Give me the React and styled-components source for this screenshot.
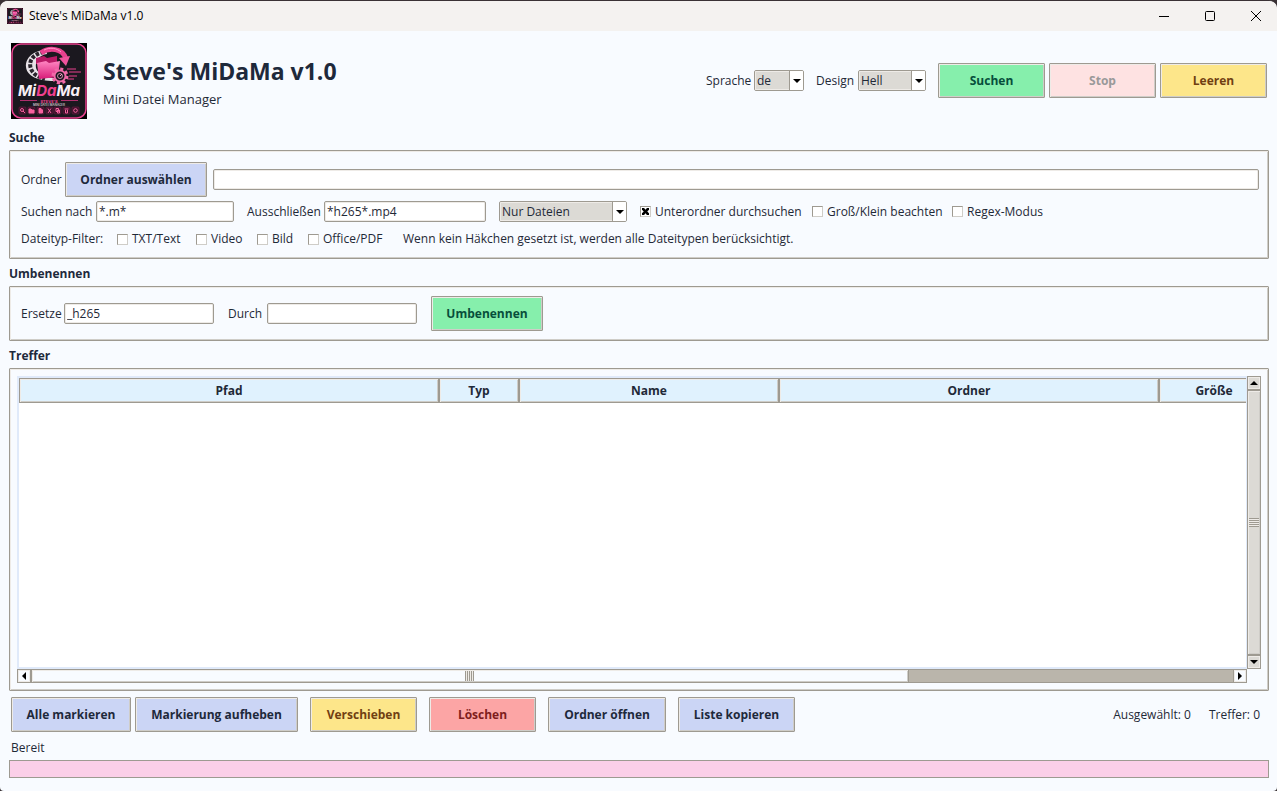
import { useState } from 'react';
import styled, { createGlobalStyle } from 'styled-components';

const GlobalStyle = createGlobalStyle`
  * {
    box-sizing: border-box;
  }
  body {
    margin: 0;
    background: #3a3235;
    font-family: 'Open Sans', 'Noto Sans', sans-serif;
    font-size: 12px;
    line-height: 20px;
    color: #1f2937;
  }
  button, input, select {
    font: inherit;
    color: inherit;
  }
`;

const Window = styled.div`
  display: flex;
  flex-direction: column;
  min-height: 100vh;
  border-top: 1px solid #3a3235;
  border-radius: 8px 8px 4px 4px;
  background: #f8fbff;
  overflow: hidden;
`;

const TitleBar = styled.div`
  display: flex;
  align-items: center;
  gap: 4px;
  height: 30px;
  padding-left: 7px;
  background: #f4f2f0;
  color: #000;
`;

const TitleText = styled.span`
  flex: 1;
  padding-left: 2px;
`;

const WindowButton = styled.button`
  display: flex;
  align-items: center;
  justify-content: center;
  width: 42px;
  height: 30px;
  padding: 0;
  border: none;
  background: transparent;
`;

const Header = styled.header`
  display: flex;
  align-items: center;
  padding: 12px 10px 9px 11px;
`;

const Brand = styled.div`
  flex: 1;
  padding-left: 16px;
`;

const BrandTitle = styled.h1`
  margin: 0;
  font-size: 23px;
  font-weight: 700;
  line-height: 36px;
  color: #1e293b;
`;

const BrandSubtitle = styled.p`
  margin: 0;
  font-size: 13px;
  line-height: 20px;
`;

const HeaderTools = styled.div`
  display: flex;
  align-items: center;
  gap: 12px;
  padding-bottom: 1px;
`;

const ButtonGroup = styled.div`
  display: flex;
  gap: 4px;
`;

const tones = {
  indigo: { background: '#cbd5f5', color: '#1e293b' },
  green: { background: '#86efac', color: '#064e3b' },
  yellow: { background: '#fde68a', color: '#713f12' },
  red: { background: '#fca5a5', color: '#7f1d1d' },
  rose: { background: '#fee2e2', color: '#999999' },
};

const Button = styled.button`
  flex: none;
  width: ${({ $width }) => $width || 107}px;
  height: 35px;
  padding: 0;
  border: 1px solid #9e9a91;
  border-radius: 1px;
  box-shadow: inset 1px 1px 0 #eeebe7, inset -1px -1px 0 #cfcdc8;
  background: ${({ $tone }) => tones[$tone].background};
  color: ${({ $tone }) => tones[$tone].color};
  font-weight: 700;
  white-space: nowrap;
`;

const Content = styled.main`
  display: flex;
  flex: 1;
  flex-direction: column;
  padding: 0 8px 13px 9px;
`;

const Section = styled.section`
  display: flex;
  flex-direction: column;
  flex: ${({ $grow }) => ($grow ? 1 : 'none')};
  margin-bottom: 5px;
`;

const SectionTitle = styled.h2`
  margin: 0;
  padding-bottom: 2px;
  font-size: 12px;
  font-weight: 700;
  line-height: 20px;
  color: #1e293b;
`;

const Frame = styled.div`
  display: flex;
  flex: 1;
  flex-direction: column;
  padding: ${({ $padding }) => $padding};
  border: 1px solid #9e9a91;
  border-radius: 1px;
  box-shadow: inset 1px 1px 0 #eeebe7, inset -1px -1px 0 #cfcdc8;
`;

const Row = styled.div`
  display: flex;
  align-items: center;
  gap: ${({ $gap }) => $gap || 0}px;
  min-height: ${({ $height }) => $height || 0}px;
`;

const Field = styled.div`
  display: flex;
  flex: ${({ $grow }) => ($grow ? 1 : 'none')};
  align-items: center;
`;

const Label = styled.label`
  flex: none;
  width: ${({ $width }) => $width}px;
  white-space: nowrap;
`;

const TextInput = styled.input`
  width: ${({ $width }) => ($width ? `${$width}px` : 'auto')};
  flex: ${({ $width }) => ($width ? 'none' : 1)};
  height: 21px;
  padding: 0 2px;
  border: 1px solid #9e9a91;
  border-radius: 2px;
  box-shadow: inset 1px 1px 0 #eeebe7, inset -1px -1px 0 #eeebe7;
  background: #fff;
  outline: none;
`;

const SelectBox = styled.div`
  display: grid;
  grid-template-columns: 1fr 14px;
  width: ${({ $width }) => $width}px;
  height: 21px;
  border: 1px solid #9e9a91;
  border-radius: 2px;
  background: #dcdad5;
  overflow: hidden;
`;

const NativeSelect = styled.select`
  grid-area: 1 / 1 / 2 / 3;
  appearance: none;
  height: 19px;
  padding: 0 16px 0 2px;
  border: none;
  box-shadow: inset 1px 1px 0 #eeebe7, inset 0 -1px 0 #eeebe7;
  background: transparent;
  line-height: 18px;
  outline: none;
`;

const SelectArrow = styled.span`
  grid-area: 1 / 2;
  display: flex;
  align-items: center;
  justify-content: center;
  border-left: 1px solid #9e9a91;
  background: #fff;
  pointer-events: none;
`;

const CheckLabel = styled.label`
  display: flex;
  flex: none;
  align-items: center;
  gap: 4px;
  width: ${({ $width }) => $width}px;
  white-space: nowrap;
`;

const CheckBox = styled.input.attrs({ type: 'checkbox' })`
  appearance: none;
  display: grid;
  place-items: center;
  width: 11px;
  height: 11px;
  margin: 0;
  border: 1px solid;
  border-color: #9e9a91 #cfcdc8 #cfcdc8 #9e9a91;
  background: #fff;

  &:checked::before {
    content: '';
    width: 7px;
    height: 7px;
    background: #000;
    clip-path: polygon(0 0, 30% 0, 50% 25%, 70% 0, 100% 0, 100% 25%, 75% 50%, 100% 75%, 100% 100%, 70% 100%, 50% 75%, 30% 100%, 0 100%, 0 75%, 25% 50%, 0 25%);
  }
`;

const ResultGrid = styled.div`
  display: grid;
  flex: 1;
  grid-template-columns: minmax(0, 1fr) 14px;
  grid-template-rows: 1fr 14px;
`;

const TableView = styled.div`
  border: 2px solid #e0eafa;
  border-right-width: 1px;
  background: #fff;
  overflow: hidden;
`;

const ResultTable = styled.table`
  width: 1250px;
  table-layout: fixed;
  border-collapse: separate;
  border-spacing: 0;
`;

const HeadCell = styled.th`
  width: ${({ $width }) => $width}px;
  height: 25px;
  padding: 0;
  border: 1px solid #9e9a91;
  box-shadow: inset 1px 1px 0 #eeebe7, inset -1px -1px 0 #cfcdc8;
  background: #e0f2fe;
  font-weight: 700;
  text-align: center;
`;

const ScrollBar = styled.div`
  display: flex;
  flex-direction: ${({ $vertical }) => ($vertical ? 'column' : 'row')};
  border: 1px solid #9e9a91;
  background: ${({ $vertical }) => ($vertical ? '#dcdad5' : '#bab5ab')};
`;

const ScrollButton = styled.button`
  display: flex;
  flex: none;
  align-items: center;
  justify-content: center;
  width: 12px;
  height: 12px;
  padding: 0;
  border: none;
  box-shadow: inset 1px 1px 0 #eeebe7, inset -1px -1px 0 #eeebe7;
  background: ${({ $vertical }) => ($vertical ? '#dcdad5' : '#f8fbff')};
`;

const ScrollTrack = styled.div`
  display: flex;
  flex: 1;
  border: solid #9e9a91;
  border-width: ${({ $vertical }) => ($vertical ? '2px 0' : '0 1px 0 2px')};
`;

const ScrollThumb = styled.div`
  display: flex;
  align-items: center;
  justify-content: center;
  width: ${({ $vertical }) => ($vertical ? '100%' : '73%')};
  border-right: ${({ $vertical }) => ($vertical ? 'none' : '1px solid #9e9a91')};
  box-shadow: inset 1px 1px 0 #eeebe7, inset -1px -1px 0 #cfcdc8;
  background: ${({ $vertical }) => ($vertical ? '#dcdad5' : '#f8fbff')};
`;

const Grip = styled.span`
  width: ${({ $vertical }) => ($vertical ? 10 : 9)}px;
  height: ${({ $vertical }) => ($vertical ? 9 : 10)}px;
  background: repeating-linear-gradient(
    ${({ $vertical }) => ($vertical ? '180deg' : '90deg')},
    #9e9a91 0 1px,
    #eeebe7 1px 2px
  );
`;

const ActionBar = styled.div`
  display: flex;
  align-items: center;
  gap: 12px;
  padding: 1px 9px 0 2px;
`;

const Counters = styled.div`
  display: flex;
  flex: 1;
  justify-content: flex-end;
  gap: 18px;
  white-space: nowrap;
`;

const Status = styled.p`
  margin: 6px 0 2px 2px;
`;

const ProgressBar = styled.div`
  height: 18px;
  border: 1px solid #9e9a91;
  background: #fbcfe8;
`;

const Arrow = ({ direction = 'down' }) => {
  const points = {
    down: '0,2 8,2 4,6',
    up: '0,6 8,6 4,2',
    left: '6,0 6,8 2,4',
    right: '2,0 2,8 6,4',
  };
  return (
    <svg width="8" height="8" viewBox="0 0 8 8" aria-hidden="true">
      <polygon points={points[direction]} fill="#000" />
    </svg>
  );
};

const Select = ({ width, options, ...rest }) => (
  <SelectBox $width={width}>
    <NativeSelect {...rest}>
      {options.map(option => (
        <option key={option}>{option}</option>
      ))}
    </NativeSelect>
    <SelectArrow>
      <Arrow />
    </SelectArrow>
  </SelectBox>
);

const Check = ({ width, label, ...rest }) => (
  <CheckLabel $width={width}>
    <CheckBox {...rest} />
    {label}
  </CheckLabel>
);

const Logo = ({ size }) => (
  <svg width={size} height={size} viewBox="0 0 76 76" role="img" aria-label="MiDaMa">
    <defs>
      <linearGradient id="pink" x1="0" y1="0" x2="0" y2="1">
        <stop offset="0" stopColor="#ff86c2" />
        <stop offset="1" stopColor="#d81b78" />
      </linearGradient>
    </defs>
    <rect width="76" height="76" fill="#000" />
    <rect x="1" y="1" width="74" height="74" rx="9" fill="#1b181f" stroke="#e9418f" strokeWidth="1.500" />
    {/* film strip */}
    <path d="M35 7C24 7 14 14 15 24C16 33 27 38 43 38L43 35C34 35 27 31 25 25C24 18 28 12 36 11z" fill="#e8e2e8" />
    <path d="M33 9C22 11 17 18 20 26C22 31 27 34 34 36" fill="none" stroke="#2a242d" strokeWidth="4" strokeDasharray="3.500 1.500" />
    {/* arrow */}
    <path d="M30 10C38 4 52 5 55 16" fill="none" stroke="#e9418f" strokeWidth="5" />
    <path d="M33 7C39 4 46 5 50 9" fill="none" stroke="#ff9acb" strokeWidth="1" />
    <path d="M48 15l11-2-4 10z" fill="#f0539c" />
    {/* folders */}
    <path d="M25 15l8-2 3 2 10-2v8H25z" fill="#b81a66" />
    <path d="M26 20l9-2 3 2 11-2-2 16-19 2z" fill="url(#pink)" />
    {/* gear with motion lines */}
    <path d="M56 26h9M58 29h12M58 33h8M57 36h6" stroke="#e9418f" strokeWidth="1" />
    <circle cx="49" cy="33" r="7" fill="none" stroke="#f06aa9" strokeWidth="3" strokeDasharray="3 2.500" />
    <circle cx="49" cy="33" r="5.500" fill="#1b181f" stroke="#f06aa9" strokeWidth="2" />
    <circle cx="49" cy="33" r="2.500" fill="none" stroke="#f7a3cb" strokeWidth="0.800" />
    <path d="M49 33l2-2" stroke="#f7a3cb" strokeWidth="1" />
    <text x="38" y="53" textAnchor="middle" fontFamily="Inter, sans-serif" fontSize="15" fontWeight="700" fontStyle="italic" fill="#f8eff5">
      Mi<tspan fill="#f0408f">Da</tspan>Ma
    </text>
    <path d="M9 57.500h17M50 57.500h17" stroke="#b02e6d" strokeWidth="1" />
    <text x="38" y="60" textAnchor="middle" fontFamily="Inter, sans-serif" fontSize="4" fontWeight="700" fill="#e9418f">
      STEVE'S
    </text>
    <text x="38" y="63" textAnchor="middle" fontFamily="Inter, sans-serif" fontSize="3" fontWeight="600" fill="#cfc4cc">
      MINI DATEI MANAGER
    </text>
    {/* tool strip */}
    {[8, 17, 26, 35, 43, 52, 61].map(x => (
      <rect key={x} x={x} y="64" width="7" height="7" rx="1" fill="#3a1229" stroke="#7d1d4f" strokeWidth="0.500" />
    ))}
    <g fill="none" stroke="#f7609f" strokeWidth="1">
      <circle cx="11" cy="67" r="1.500" />
      <path d="M12 68l2 2" />
      <path d="M18 66h2l1 1h2v3h-5z" fill="#f7609f" />
      <path d="M28 65.500h2l1.500 1.500v3h-3.500z" fill="#f7609f" />
      <path d="M37 65.500l3 4.500M40 65.500l-3 4.500" />
      <path d="M45 65.500h2.500v3H45zM46.500 67h2v3h-2z" />
      <path d="M53.500 66h4M54.500 67v3h2v-3" />
      <circle cx="64.500" cy="67.500" r="1.800" />
    </g>
  </svg>
);

const columns = [
  { title: 'Pfad', width: 420 },
  { title: 'Typ', width: 80 },
  { title: 'Name', width: 260 },
  { title: 'Ordner', width: 380 },
  { title: 'Größe', width: 110 },
];

const App = () => {
  const [folder, setFolder] = useState('');
  const [pattern, setPattern] = useState('*.m*');
  const [exclude, setExclude] = useState('*h265*.mp4');
  const [replace, setReplace] = useState('_h265');
  const [replaceBy, setReplaceBy] = useState('');

  return (
    <>
      <GlobalStyle />
      <Window>
        <TitleBar>
          <Logo size={16} />
          <TitleText>Steve's MiDaMa v1.0</TitleText>
          <WindowButton aria-label="Minimieren">
            <svg width="10" height="11" viewBox="0 0 10 11">
              <path d="M0 5.500h10" stroke="#000" />
            </svg>
          </WindowButton>
          <WindowButton aria-label="Maximieren">
            <svg width="10" height="10" viewBox="0 0 10 10">
              <rect x="0.500" y="0.500" width="9" height="9" rx="1" fill="none" stroke="#000" />
            </svg>
          </WindowButton>
          <WindowButton aria-label="Schließen">
            <svg width="10" height="10" viewBox="0 0 10 10">
              <path d="M0 0l10 10M10 0l-10 10" stroke="#000" />
            </svg>
          </WindowButton>
        </TitleBar>

        <Header>
          <Logo size={76} />
          <Brand>
            <BrandTitle>Steve's MiDaMa v1.0</BrandTitle>
            <BrandSubtitle>Mini Datei Manager</BrandSubtitle>
          </Brand>
          <HeaderTools>
            <Field>
              <Label htmlFor="language" $width={48}>Sprache</Label>
              <Select id="language" width={50} options={['de', 'en']} />
            </Field>
            <Field>
              <Label htmlFor="theme" $width={42}>Design</Label>
              <Select id="theme" width={68} options={['Hell', 'Dunkel']} />
            </Field>
            <ButtonGroup>
              <Button $tone="green">Suchen</Button>
              <Button $tone="rose" disabled>Stop</Button>
              <Button $tone="yellow">Leeren</Button>
            </ButtonGroup>
          </HeaderTools>
        </Header>

        <Content>
          <Section>
            <SectionTitle>Suche</SectionTitle>
            <Frame $padding="11px 9px 6px 11px">
              <Row $gap={6} $height={35}>
                <Field>
                  <Label htmlFor="folder" $width={44}>Ordner</Label>
                  <Button $tone="indigo" $width={142}>Ordner auswählen</Button>
                </Field>
                <Field $grow>
                  <TextInput id="folder" value={folder} onChange={e => setFolder(e.target.value)} />
                </Field>
              </Row>
              <Row $gap={13} $height={29}>
                <Field>
                  <Label htmlFor="pattern" $width={75}>Suchen nach</Label>
                  <TextInput id="pattern" $width={138} value={pattern} onChange={e => setPattern(e.target.value)} />
                </Field>
                <Field>
                  <Label htmlFor="exclude" $width={77}>Ausschließen</Label>
                  <TextInput id="exclude" $width={162} value={exclude} onChange={e => setExclude(e.target.value)} />
                </Field>
                <Select aria-label="Suchbereich" width={128} options={['Nur Dateien', 'Nur Ordner']} />
                <Field>
                  <Check width={172} label="Unterordner durchsuchen" defaultChecked />
                  <Check width={140} label="Groß/Klein beachten" />
                  <Check width={100} label="Regex-Modus" />
                </Field>
              </Row>
              <Row $height={26}>
                <Label as="span" $width={96}>Dateityp-Filter:</Label>
                <Check width={79} label="TXT/Text" />
                <Check width={61} label="Video" />
                <Check width={51} label="Bild" />
                <Check width={95} label="Office/PDF" />
                <span>Wenn kein Häkchen gesetzt ist, werden alle Dateitypen berücksichtigt.</span>
              </Row>
            </Frame>
          </Section>

          <Section>
            <SectionTitle>Umbenennen</SectionTitle>
            <Frame $padding="9px 11px">
              <Row $gap={14}>
                <Field>
                  <Label htmlFor="replace" $width={43}>Ersetze</Label>
                  <TextInput id="replace" $width={150} value={replace} onChange={e => setReplace(e.target.value)} />
                </Field>
                <Field>
                  <Label htmlFor="replaceBy" $width={39}>Durch</Label>
                  <TextInput id="replaceBy" $width={150} value={replaceBy} onChange={e => setReplaceBy(e.target.value)} />
                </Field>
                <Button $tone="green" $width={112}>Umbenennen</Button>
              </Row>
            </Frame>
          </Section>

          <Section $grow>
            <SectionTitle>Treffer</SectionTitle>
            <Frame $padding="7px">
              <ResultGrid>
                <TableView>
                  <ResultTable>
                    <thead>
                      <tr>
                        {columns.map(({ title, width }) => (
                          <HeadCell key={title} $width={width} scope="col">{title}</HeadCell>
                        ))}
                      </tr>
                    </thead>
                    <tbody />
                  </ResultTable>
                </TableView>
                <ScrollBar $vertical>
                  <ScrollButton $vertical aria-label="Nach oben"><Arrow direction="up" /></ScrollButton>
                  <ScrollTrack $vertical>
                    <ScrollThumb $vertical><Grip $vertical /></ScrollThumb>
                  </ScrollTrack>
                  <ScrollButton $vertical aria-label="Nach unten"><Arrow direction="down" /></ScrollButton>
                </ScrollBar>
                <ScrollBar>
                  <ScrollButton aria-label="Nach links"><Arrow direction="left" /></ScrollButton>
                  <ScrollTrack>
                    <ScrollThumb><Grip /></ScrollThumb>
                  </ScrollTrack>
                  <ScrollButton aria-label="Nach rechts"><Arrow direction="right" /></ScrollButton>
                </ScrollBar>
              </ResultGrid>
            </Frame>
          </Section>

          <ActionBar>
            <ButtonGroup>
              <Button $tone="indigo" $width={120}>Alle markieren</Button>
              <Button $tone="indigo" $width={163}>Markierung aufheben</Button>
            </ButtonGroup>
            <Button $tone="yellow">Verschieben</Button>
            <Button $tone="red">Löschen</Button>
            <Button $tone="indigo" $width={118}>Ordner öffnen</Button>
            <Button $tone="indigo" $width={117}>Liste kopieren</Button>
            <Counters>
              <span>Ausgewählt: 0</span>
              <span>Treffer: 0</span>
            </Counters>
          </ActionBar>

          <Status>Bereit</Status>
          <ProgressBar role="progressbar" aria-label="Fortschritt" aria-valuenow={0} />
        </Content>
      </Window>
    </>
  );
};

export default App;
